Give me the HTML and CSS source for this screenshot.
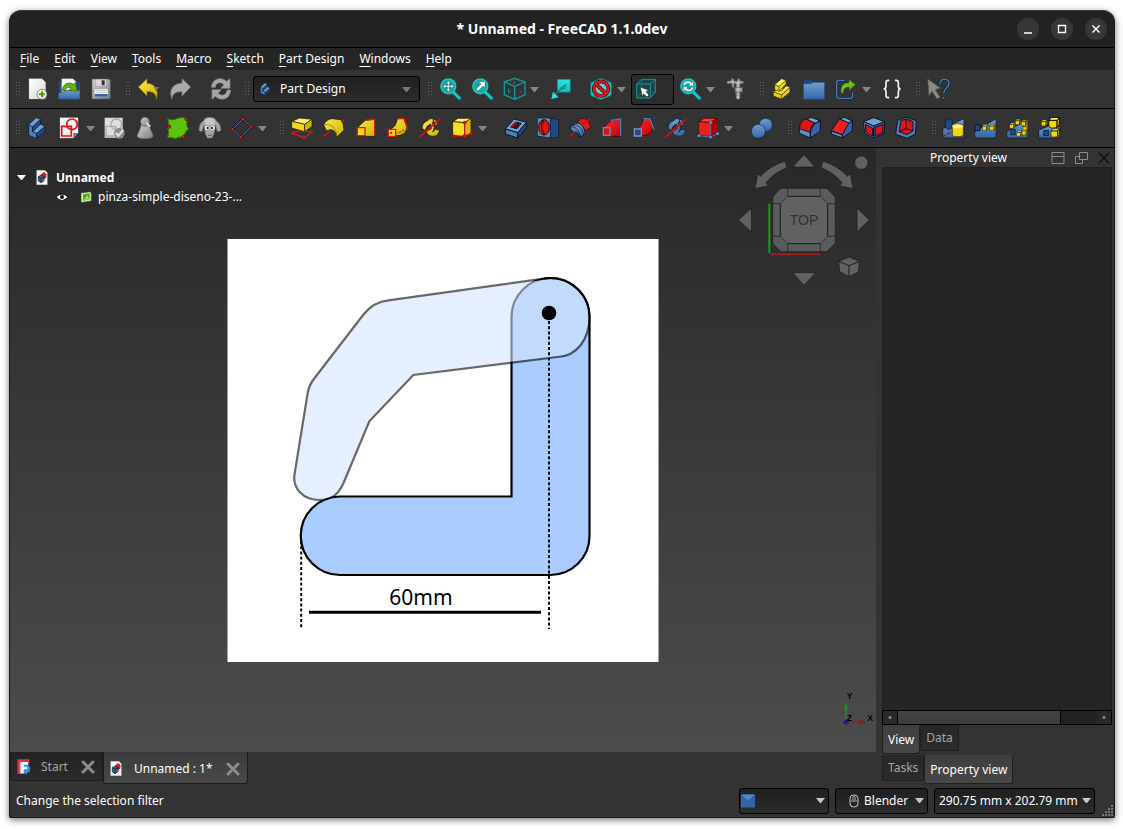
FILE: index.html
```html
<!DOCTYPE html>
<html lang="en">
<head>
<meta charset="utf-8">
<title>* Unnamed - FreeCAD 1.1.0dev</title>
<link rel="stylesheet" href="styles.css">
</head>
<body>
<svg class="defs" aria-hidden="true">
  <defs>
    <linearGradient id="blue" x1="0" y1="0" x2="0" y2="1"><stop offset="0" stop-color="#729fcf"/><stop offset="1" stop-color="#3465a4"/></linearGradient>
    <linearGradient id="yellow" x1="0" y1="0" x2="1" y2="1"><stop offset="0" stop-color="#fce94f"/><stop offset="1" stop-color="#d0b000"/></linearGradient>
    <linearGradient id="red" x1="0" y1="0" x2="1" y2="1"><stop offset="0" stop-color="#ff3030"/><stop offset="1" stop-color="#c00000"/></linearGradient>
    <linearGradient id="grey" x1="0" y1="0" x2="1" y2="1"><stop offset="0" stop-color="#d4d4d4"/><stop offset="1" stop-color="#7c7c7c"/></linearGradient>
    <linearGradient id="paper" x1="0" y1="0" x2="1" y2="1"><stop offset="0" stop-color="#ffffff"/><stop offset="1" stop-color="#d8dad4"/></linearGradient>
    <linearGradient id="green" x1="0" y1="0" x2="1" y2="1"><stop offset="0" stop-color="#8ae234"/><stop offset="1" stop-color="#4e9a06"/></linearGradient>
    <linearGradient id="teal" x1="0" y1="0" x2="0" y2="1"><stop offset="0" stop-color="#2de6e6"/><stop offset="1" stop-color="#0fb8bb"/></linearGradient>
    <symbol id="body" viewBox="0 0 72 72"><g stroke="#0b1521" stroke-width="2" stroke-linejoin="round"><path d="M8 26 30 5l14 5-12 13v10l14 4-16 14v15L8 54Z" fill="#729fcf"/><path d="M8 26l12 6v15l12 5v16L8 58Z" fill="#4a7fc0"/><path d="M20 32 44 10v14L30 38l-10 9ZM32 52l25-22v15L32 68Z" fill="#204a87"/><path d="M20 47 43 25l14 6-25 21Z" fill="#729fcf"/></g></symbol>
    <symbol id="document" viewBox="0 0 36 45"><path d="M2 1h25l7 7v36H2Z" fill="#f4f4f4" stroke="#bbb"/><path d="M16 13l9-6 6 6-1 10-8 4Z" fill="#e01b24" stroke="#700"/><path d="M7 20l9-5 8 5v12l-9 6-8-5Z" fill="#3465a4" stroke="#0b1521" stroke-width="2"/><path d="M7 20l8 5 9-5M15 25v12" fill="none" stroke="#0b1521" stroke-width="2"/></symbol>
    <symbol id="close" viewBox="0 0 14 14"><path d="M2 2l10 10M12 2 2 12" stroke="#8b8b8b" stroke-width="3" stroke-linecap="round"/></symbol>
    <symbol id="arrow" viewBox="0 0 9 5"><path d="M0 0h9L5 5H4Z" fill="currentColor"/></symbol>
    <symbol id="cubelet" viewBox="0 0 24 24"><g stroke="#151500" stroke-width="2" stroke-linejoin="round"><path d="M1 7l5-6h17l-5 6Z" fill="#fff36b"/><path d="M1 7h17v15l-12 1-5-4Z" fill="#f3d900"/><path d="M18 7l5-6v14l-5 7Z" fill="#c4a000"/></g></symbol>
  </defs>
</svg>

<main class="window">
  <header class="titlebar">
    <h1 class="title">* Unnamed - FreeCAD 1.1.0dev</h1>
    <div class="window-buttons">
      <button class="window-button" aria-label="Minimize"><svg viewBox="0 0 22 22"><path d="M7 15h8" stroke="#fff" stroke-width="1.5"/></svg></button>
      <button class="window-button" aria-label="Maximize"><svg viewBox="0 0 22 22"><path d="M7.500 7.500h7v7h-7Z" fill="none" stroke="#fff" stroke-width="1.300"/></svg></button>
      <button class="window-button" aria-label="Close"><svg viewBox="0 0 22 22"><path d="M7.500 7.500l7 7M14.500 7.500l-7 7" stroke="#fff" stroke-width="1.500"/></svg></button>
    </div>
  </header>

  <nav class="menubar">
    <button class="menu"><u>F</u>ile</button>
    <button class="menu"><u>E</u>dit</button>
    <button class="menu"><u>V</u>iew</button>
    <button class="menu"><u>T</u>ools</button>
    <button class="menu"><u>M</u>acro</button>
    <button class="menu"><u>S</u>ketch</button>
    <button class="menu"><u>P</u>art Design</button>
    <button class="menu"><u>W</u>indows</button>
    <button class="menu"><u>H</u>elp</button>
  </nav>

  <div class="toolbar">
    <div class="group">
      <i class="handle"></i>
      <button class="tool" aria-label="New"><svg viewBox="0 0 72 72"><path d="M9 5h38l12 12v49H9Z" fill="url(#paper)" stroke="#aaa"/><path d="M47 5v12h12Z" fill="#fff" stroke="#bbb"/><circle cx="48" cy="52" r="15" fill="#f4f4f4" stroke="#555" stroke-width="2"/><path d="M48 43v18M39 52h18" stroke="#4e9a06" stroke-width="6"/></svg></button>
      <button class="tool" aria-label="Open"><svg viewBox="0 0 72 72"><path d="M2 12h10v30H2Z" fill="#204a87"/><path d="M11 5h34l9 9v40H11Z" fill="#f5f5f5" stroke="#999"/><path d="M54 14h12v28H54Z" fill="#204a87"/><path d="M2 46h16l5-6h43v27H2Z" fill="url(#blue)" stroke="#204a87" stroke-width="2"/><path d="M13 42c1-22 19-29 33-20l6-5 6 26-25-3 7-7c-9-6-18-1-19 9Z" fill="#5fb40d" stroke="#2c5a04" stroke-width="2"/></svg></button>
      <button class="tool" aria-label="Save"><svg viewBox="0 0 72 72"><path d="M6 6h51l4 5v55H6Z" fill="url(#grey)" stroke="#555" stroke-width="2"/><path d="M17 7h32v21H17Z" fill="#d9d9d9" stroke="#888"/><path d="M35 10h9v15h-9Z" fill="#333"/><path d="M13 35h41v25H13Z" fill="#f6f6f6" stroke="#777"/><path d="M17 40h33M17 46h33" stroke="#aaa" stroke-width="2"/><path d="M14 51h39v8H14Z" fill="#3465a4"/></svg></button>
    </div>
    <div class="group">
      <i class="handle"></i>
      <button class="tool" aria-label="Undo"><svg viewBox="0 0 72 72"><path d="M7 30 33 5v14c22 0 37 19 29 48-2-16-11-24-29-23v13Z" fill="url(#yellow)" stroke="#7a6500" stroke-width="2" stroke-linejoin="round"/><path d="M52 30h18L60 41Z" fill="#777"/></svg></button>
      <button class="tool" aria-label="Redo"><svg viewBox="0 0 72 72"><path d="M68 30 42 5v14C18 19 0 37 12 67c0-15 10-24 30-23v13Z" fill="#aaa" stroke="#777" stroke-width="2" stroke-linejoin="round"/></svg></button>
      <button class="tool spaced" aria-label="Refresh"><svg viewBox="0 0 72 72"><g fill="#a6a6a6" stroke="#858585" stroke-width="2"><path d="M7 31C9 4 36-2 53 13l10-8v29H35l10-11C33 13 20 17 19 31Z"/><path d="M65 39C63 68 36 74 19 58L9 67V38h28L27 49c12 10 25 6 27-10Z"/></g></svg></button>
    </div>
    <div class="group">
      <i class="handle"></i>
      <div class="combo workbench">
        <svg class="combo-icon"><use href="#body"/></svg>
        <select aria-label="Workbench"><option>Part Design</option></select>
        <svg class="combo-arrow"><use href="#arrow"/></svg>
      </div>
    </div>
    <div class="group">
      <i class="handle"></i>
      <button class="tool" aria-label="Fit all"><svg viewBox="0 0 72 72"><path d="M44 44 65 64" stroke="#0a7f82" stroke-width="11" stroke-linecap="round"/><path d="M44 44 64 63" stroke="#1ccdd0" stroke-width="7" stroke-linecap="round"/><circle cx="31" cy="28" r="22" fill="#16a4a6" stroke="#1fc4c7" stroke-width="5"/><path d="M31 12l6 7h-4v7h7v-4l7 6-7 6v-4h-7v7h4l-6 7-6-7h4v-7h-7v4l-7-6 7-6v4h7v-7h-4Z" fill="#fff" stroke="#055" stroke-width="1"/></svg></button>
      <button class="tool" aria-label="Fit selection"><svg viewBox="0 0 72 72"><path d="M44 44 65 64" stroke="#0a7f82" stroke-width="11" stroke-linecap="round"/><path d="M44 44 64 63" stroke="#1ccdd0" stroke-width="7" stroke-linecap="round"/><circle cx="31" cy="28" r="22" fill="#16a4a6" stroke="#1fc4c7" stroke-width="5"/><path d="M26 14h19v19l-6-6-15 15-6-6 15-15Z" fill="#fff" stroke="#055" stroke-width="1"/></svg></button>
      <button class="tool" aria-label="Isometric"><svg viewBox="0 0 72 72"><path d="M38 4 69 15v38L38 67 7 53V15ZM7 15l31 13 31-13M38 28v39" fill="none" stroke="#12999b" stroke-width="4" stroke-linejoin="round"/><path d="M20 45v-9M18 49l7-5M37 13v8M58 45l-6-5" stroke="#12999b" stroke-width="3"/></svg></button>
      <button class="drop" aria-label="Standard views"><svg><use href="#arrow"/></svg></button>
      <button class="tool" aria-label="Align to selection"><svg viewBox="0 0 72 72"><path d="M28 7h39v39H28Z" fill="url(#teal)" stroke="#08797b" stroke-width="2"/><path d="M50 26 20 53" stroke="#087d80" stroke-width="4"/><path d="M10 66l5-22 17 17Z" fill="#27dfe2"/><path d="M40 33l14-11-4 13Z" fill="none" stroke="#066" stroke-width="2"/></svg></button>
      <button class="tool spaced" aria-label="Draw style"><svg viewBox="0 0 72 72"><path d="M36 4 67 17v38L36 68 5 55V17Z" fill="#17c9cc" stroke="#087577" stroke-width="3"/><circle cx="36" cy="35" r="22" fill="#c7c7c7" fill-opacity=".45" stroke="#400" stroke-width="11"/><path d="M21 21l30 29" stroke="#400" stroke-width="11"/><circle cx="36" cy="35" r="22" fill="none" stroke="#d81b1b" stroke-width="7"/><path d="M21 21l30 29" stroke="#d81b1b" stroke-width="7"/></svg></button>
      <button class="drop" aria-label="Draw styles"><svg><use href="#arrow"/></svg></button>
      <button class="tool pressed" aria-label="Box element selection"><svg viewBox="0 0 72 72"><path d="M8 21 23 7h41v39L49 63H8ZM8 21h41v42M49 21 64 7" fill="#0a6465" fill-opacity=".45" stroke="#14999b" stroke-width="3"/><path d="M23 8v38H64M23 46 9 62" stroke="#14888a" stroke-width="2" fill="none"/><path d="M19 31l25 8-8 5 9 10-6 6-10-9-4 8Z" fill="#fff" stroke="#333" stroke-width="2"/></svg></button>
      <button class="tool" aria-label="Zoom"><svg viewBox="0 0 72 72"><path d="M44 44 65 64" stroke="#0a7f82" stroke-width="11" stroke-linecap="round"/><path d="M44 44 64 63" stroke="#1ccdd0" stroke-width="7" stroke-linecap="round"/><circle cx="31" cy="28" r="22" fill="#16a4a6" stroke="#1fc4c7" stroke-width="5"/><path d="M15 25c2-14 19-16 26-8l5-4v14H32l4-5c-7-6-13-3-15 4ZM47 31c-2 14-18 16-26 8l-5 4V29h14l-4 5c7 6 13 3 15-4Z" fill="#eee" stroke="#266" stroke-width="1"/></svg></button>
      <button class="drop" aria-label="Zoom options"><svg><use href="#arrow"/></svg></button>
      <button class="tool" aria-label="Measure"><svg viewBox="0 0 72 72"><path d="M9 12h11l4-8 6 3v5h10l2-8 6 3v5h10v8H48v43l-6 6-6-6V20h-6v14l-6-4V20H9Z" fill="#b4b5b2" stroke="#555753" stroke-width="3"/><path d="M33 31h22v14H33Z" fill="#a9aaa7" stroke="#555" stroke-width="3"/><path d="M42 16v46" stroke="#eee" stroke-width="2"/><path d="M38 24h5M38 50h5M38 56h5" stroke="#555" stroke-width="2"/></svg></button>
    </div>
    <div class="group">
      <i class="handle"></i>
      <button class="tool" aria-label="Create part"><svg viewBox="0 0 72 72"><g stroke="#3c3500" stroke-width="2" stroke-linejoin="round"><path d="M10 44l14-8 36-6v15L35 66 10 57Z" fill="#edd400"/><path d="M10 44l25 9v13M35 53l25-22" fill="none"/><path d="M10 44l12-6 13 5 13-17 12 5-25 22Z" fill="#fce94f"/><path d="M14 23 35 5l13 5v12L27 43l-13-5Z" fill="#f2d91b"/><path d="M14 23l13 5v15" fill="none"/><path d="M14 23 35 5l13 5-21 18Z" fill="#fff06a"/></g></svg></button>
      <button class="tool" aria-label="Create group"><svg viewBox="0 0 72 72"><path d="M4 7h23l5 6h30v12H4Z" fill="#204a87" stroke="#122a4e" stroke-width="2"/><path d="M4 20h22l7-4h35v51H4Z" fill="url(#blue)" stroke="#204a87" stroke-width="2"/></svg></button>
      <button class="tool" aria-label="Make link"><svg viewBox="0 0 72 72"><path d="M31 10H14q-6 0-6 7v40q0 7 7 7h34q7 0 7-7V47" fill="none" stroke="#10213a" stroke-width="7"/><path d="M31 10H14q-6 0-6 7v40q0 7 7 7h34q7 0 7-7V47" fill="none" stroke="#4b80c0" stroke-width="4"/><path d="M22 50c-5-22 6-33 23-33V7l20 16-20 18V31c-11 0-18 5-16 17Z" fill="url(#green)" stroke="#234b03" stroke-width="2"/></svg></button>
      <button class="drop" aria-label="Link actions"><svg><use href="#arrow"/></svg></button>
      <button class="tool" aria-label="Expression"><svg viewBox="0 0 72 72"><path d="M28 10h-4q-6 0-6 7v11q0 8-7 8 7 0 7 8v11q0 7 6 7h4M45 10h4q6 0 6 7v11q0 8 7 8-7 0-7 8v11q0 7-6 7h-4" fill="none" stroke="#f2f2f2" stroke-width="5"/></svg></button>
    </div>
    <div class="group">
      <i class="handle"></i>
      <button class="tool" aria-label="What's this?"><svg viewBox="0 0 72 72"><path d="M42 22C40 3 68 1 69 19c0 14-16 14-16 30" fill="none" stroke="#10213a" stroke-width="8"/><path d="M42 22C40 3 68 1 69 19c0 14-16 14-16 30" fill="none" stroke="#4b80c0" stroke-width="4"/><circle cx="53" cy="63" r="4" fill="#4b80c0" stroke="#10213a" stroke-width="2"/><path d="M5 6l38 27-15 5 14 22-9 6-15-23-9 13Z" fill="#898b87" stroke="#51534f" stroke-width="2"/></svg></button>
    </div>
  </div>

  <div class="toolbar design">
    <div class="group">
      <i class="handle"></i>
      <button class="tool" aria-label="New body"><svg><use href="#body"/></svg></button>
      <button class="tool" aria-label="New sketch"><svg viewBox="0 0 72 72"><path d="M6 5h54v46L46 66H6Z" fill="#f6f6f6" stroke="#ccc"/><path d="M46 66V51h14Z" fill="#777"/><circle cx="42" cy="25" r="16" fill="none" stroke="#e81010" stroke-width="5"/><path d="M11 31h29v29H11Z" fill="none" stroke="#e81010" stroke-width="5"/></svg></button>
      <button class="drop" aria-label="Sketch options"><svg><use href="#arrow"/></svg></button>
      <button class="tool" aria-label="Validate sketch"><svg viewBox="0 0 72 72"><path d="M8 5h54v60H8Z" fill="#dedede"/><circle cx="43" cy="25" r="16" fill="none" stroke="#aaa" stroke-width="4"/><path d="M12 31h29v29H12Z" fill="none" stroke="#aaa" stroke-width="4"/><circle cx="52" cy="52" r="16" fill="#8b8b8b"/><path d="M41 50l8 9 15-18" fill="none" stroke="#ddd" stroke-width="7"/></svg></button>
      <button class="tool" aria-label="Check geometry"><svg viewBox="0 0 72 72"><path d="M23 27 9 60q2 8 24 8t25-8L44 27Z" fill="url(#grey)" stroke="#666" stroke-width="2"/><ellipse cx="33" cy="30" rx="14" ry="4" fill="#a7a7a7"/><circle cx="33" cy="17" r="13" fill="url(#grey)" stroke="#666" stroke-width="2"/><path d="M37 20l12 12" stroke="#ddd" stroke-width="6"/></svg></button>
      <button class="tool" aria-label="Shape binder"><svg viewBox="0 0 72 72"><path d="M5 8q16 8 30-1 14-5 31 0-9 21 2 32-14 9-13 25-19-4-26 4-12-5-24-3 6-17-1-31Q11 23 5 8Z" fill="#5dc20b" stroke="#377706" stroke-width="3"/><g fill="#e41b1b" stroke="#300" stroke-width="2"><circle cx="62" cy="9" r="5"/><circle cx="9" cy="32" r="5"/><circle cx="53" cy="63" r="5"/></g></svg></button>
      <button class="tool" aria-label="Clone"><svg viewBox="0 0 72 72"><path d="M17 14q2-10 18-10 17 0 19 10 14 6 15 30l-11 3-6-19-4 26-6 12H28l-6-12-4-26-6 19-9-3q0-24 14-30Z" fill="#a6a6a6" stroke="#686868" stroke-width="2"/><path d="M19 14q16-17 32 0l-3 12H22Z" fill="#c4c4c4"/><ellipse cx="27" cy="36" rx="7" ry="6" fill="#e7e7e7"/><ellipse cx="44" cy="36" rx="7" ry="6" fill="#e7e7e7"/><circle cx="29" cy="36" r="3"/><circle cx="42" cy="36" r="3"/><path d="M29 56q7 6 13 0" fill="none" stroke="#555" stroke-width="3"/></svg></button>
      <button class="tool" aria-label="Datum plane"><svg viewBox="0 0 72 72"><path d="M39 9 63 32 32 63 8 40Z" fill="none" stroke="#10213a" stroke-width="7"/><path d="M39 9 63 32 32 63 8 40Z" fill="none" stroke="#4b80c0" stroke-width="3"/><g fill="#ef2020" stroke="#500" stroke-width="2"><circle cx="39" cy="9" r="5"/><circle cx="63" cy="32" r="5"/><circle cx="32" cy="63" r="5"/><circle cx="8" cy="40" r="5"/></g></svg></button>
      <button class="drop" aria-label="Datum options"><svg><use href="#arrow"/></svg></button>
    </div>
    <div class="group">
      <i class="handle"></i>
      <button class="tool" aria-label="Pad"><svg viewBox="0 0 72 72"><path d="M5 52 28 44l38 4-23 17Z" fill="none" stroke="#e01717" stroke-width="4"/><g stroke="#171300" stroke-width="2" stroke-linejoin="round"><path d="M5 16 29 6l37 4-22 15Z" fill="#fff36b"/><path d="M5 16l39 9v22L5 36Z" fill="#f0d81c"/><path d="M44 25 66 10v21L44 47Z" fill="#d3b900"/></g></svg></button>
      <button class="tool" aria-label="Revolution"><svg viewBox="0 0 72 72"><path d="M48 25 68 10" stroke="#d01010" stroke-width="5"/><path d="M5 26Q14 9 30 8l26 3q10 12 10 31L45 63Q42 44 27 41l-14 3Z" fill="url(#yellow)" stroke="#171300" stroke-width="2"/><path d="M5 26q36-6 40 37" fill="none" stroke="#806c00" stroke-width="2"/><path d="M4 62l19-15" stroke="#d01010" stroke-width="5"/></svg></button>
      <button class="tool" aria-label="Loft"><svg viewBox="0 0 72 72"><path d="M10 35 34 13l29-3v51H33Z" fill="url(#yellow)" stroke="#171300" stroke-width="2"/><path d="M32 13 62 9v51" fill="none" stroke="#e01717" stroke-width="4"/><path d="M10 35h23v24H10Z" fill="#f1d81b" stroke="#e01717" stroke-width="4"/></svg></button>
      <button class="tool" aria-label="Sweep"><svg viewBox="0 0 72 72"><path d="M10 41Q32 32 34 8l22-1q18 44-15 51L25 59Z" fill="url(#yellow)" stroke="#171300" stroke-width="2"/><path d="M34 8h20l12 34" fill="none" stroke="#e01717" stroke-width="4"/><path d="M34 50q13-1 21-10" fill="none" stroke="#c87700" stroke-width="5"/><path d="M7 40h22v21H7Z" fill="#f1d81b" stroke="#e01717" stroke-width="4"/><path d="M9 53 18 45v8Z" fill="#d01010"/><circle cx="67" cy="6" r="4" fill="#900"/></svg></button>
      <button class="tool" aria-label="Helix"><svg viewBox="0 0 72 72"><path d="M47 11q-10-8-18 3-16 5-17 23l10 7q2-15 16-20l2 14-16 9 8 11q27 11 33-16l-12-2-9 8q10-17-1-25ZM46 9l14 8-5 14" fill="url(#yellow)" stroke="#171300" stroke-width="2"/><path d="M4 64 67 8" stroke="#d01010" stroke-width="5"/></svg></button>
      <button class="tool" aria-label="Additive primitive"><svg viewBox="0 0 72 72"><g stroke="#171300" stroke-width="2"><path d="M8 17 24 7h39L44 20Z" fill="#fff36b"/><path d="M8 17l36 3v42L8 58Z" fill="#f4de29"/><path d="M44 20 63 7v44L44 62Z" fill="#d2b800"/></g><path d="M44 20v36M9 61l35-1 22-8" fill="none" stroke="#d01010" stroke-width="3"/><g fill="#e01010" stroke="#500"><circle cx="44" cy="20" r="5"/><circle cx="9" cy="60" r="5"/><circle cx="44" cy="61" r="6"/><circle cx="65" cy="52" r="5"/></g></svg></button>
      <button class="drop" aria-label="Additive primitives"><svg><use href="#arrow"/></svg></button>
      <button class="tool apart" aria-label="Pocket"><svg viewBox="0 0 72 72"><g stroke="#0b1521" stroke-width="3" stroke-linejoin="round"><path d="M4 39 30 9l38 10-27 31Z" fill="#729fcf"/><path d="M4 39l37 11v16L4 54Z" fill="#4b80c0"/><path d="M41 50 68 19v16L41 66Z" fill="#204a87"/><path d="M20 33 35 18l17 4-14 16Z" fill="#d90b0b"/><path d="M28 34l15-14-1 14-6 4Z" fill="#6e0000"/></g></svg></button>
      <button class="tool" aria-label="Hole"><svg viewBox="0 0 72 72"><path d="M43 7l25 3v55l-25 1Z" fill="#204a87" stroke="#0b1521" stroke-width="2"/><path d="M4 6h39v60L4 60Z" fill="#5d8dc5" stroke="#0b1521" stroke-width="2"/><ellipse cx="24" cy="34" rx="16" ry="23" fill="#dc1717" stroke="#300" stroke-width="3"/><path d="M23 13q-14 21 3 42" fill="none" stroke="#750000" stroke-width="5"/></svg></button>
      <button class="tool" aria-label="Groove"><svg viewBox="0 0 72 72"><path d="M26 19 41 7q23 0 27 27L53 45Z" fill="#dd1919" stroke="#300" stroke-width="2"/><path d="M41 23 67 10" stroke="#d01010" stroke-width="5"/><path d="M4 34 22 22q21-7 30 28l-12 13-7-4q-5-15-16-9Z" fill="url(#blue)" stroke="#0b1521" stroke-width="3"/><path d="M4 34q24-7 34 26M14 28q24-7 33 27" fill="none" stroke="#0b1521" stroke-width="2"/><path d="M5 62l15-12" stroke="#d01010" stroke-width="5"/></svg></button>
      <button class="tool" aria-label="Subtractive loft"><svg viewBox="0 0 72 72"><path d="M10 35 34 13l29-3v51H33Z" fill="url(#red)" stroke="#200" stroke-width="2"/><path d="M32 13 62 9v51" fill="none" stroke="#4b80c0" stroke-width="4"/><path d="M10 35h20v23H10Z" fill="#d81515" stroke="#5d8dc5" stroke-width="4"/></svg></button>
      <button class="tool" aria-label="Subtractive sweep"><svg viewBox="0 0 72 72"><path d="M10 41Q32 32 34 8l22-1q18 44-15 51L25 59Z" fill="url(#red)" stroke="#200" stroke-width="2"/><path d="M34 8h20l12 34" fill="none" stroke="#4b80c0" stroke-width="4"/><path d="M7 39h21v21H7Z" fill="#204a87" stroke="#6b9ad0" stroke-width="4"/><path d="M9 53 18 45v8Z" fill="#d01010"/><circle cx="67" cy="6" r="4" fill="#204a87"/></svg></button>
      <button class="tool" aria-label="Subtractive helix"><svg viewBox="0 0 72 72"><path d="M47 11q-10-8-18 3-16 5-17 23l10 7q2-15 16-20l2 14-16 9 8 11q27 11 33-16l-12-2-9 8q10-17-1-25ZM46 9l14 8-5 14" fill="url(#blue)" stroke="#0b1521" stroke-width="2"/><path d="M4 64 67 8" stroke="#d01010" stroke-width="5"/></svg></button>
      <button class="tool" aria-label="Subtractive primitive"><svg viewBox="0 0 72 72"><g stroke="#300" stroke-width="2"><path d="M8 17 24 7h39L44 20Z" fill="#ff3939"/><path d="M8 17l36 3v42L8 57Z" fill="#ed2020"/><path d="M44 20 63 7v44L44 62Z" fill="#b60000"/></g><path d="M44 20v36M9 59l35 4 20-10" fill="none" stroke="#4b80c0" stroke-width="3"/><g fill="#6b9ad0" stroke="#0b1521"><circle cx="44" cy="20" r="5"/><circle cx="9" cy="59" r="5"/><circle cx="44" cy="63" r="5"/><circle cx="65" cy="53" r="5"/></g></svg></button>
      <button class="drop" aria-label="Subtractive primitives"><svg><use href="#arrow"/></svg></button>
      <button class="tool apart" aria-label="Boolean"><svg viewBox="0 0 72 72"><circle cx="47" cy="27" r="20" fill="url(#blue)" stroke="#0b2545" stroke-width="2"/><circle cx="25" cy="46" r="21" fill="url(#blue)" stroke="#0b2545" stroke-width="2"/></svg></button>
    </div>
    <div class="group">
      <i class="handle"></i>
      <button class="tool" aria-label="Fillet"><svg viewBox="0 0 72 72"><g stroke="#0b1521" stroke-width="3" stroke-linejoin="round"><path d="M4 34v18l33 14V45Z" fill="#5d8dc5"/><path d="M37 45 50 22l17-7v31L37 66Z" fill="#3465a4"/><path d="M25 9 40 4l27 11-17 7Z" fill="#729fcf"/><path d="M4 38Q6 12 25 9l27 13q-15 4-15 27Z" fill="#e01717"/></g></svg></button>
      <button class="tool" aria-label="Chamfer"><svg viewBox="0 0 72 72"><g stroke="#0b1521" stroke-width="3" stroke-linejoin="round"><path d="M4 45v9l33 12V56Z" fill="#5d8dc5"/><path d="M37 56 56 21l11-6v30L37 66Z" fill="#3465a4"/><path d="M28 9l15-5 24 11-11 6Z" fill="#729fcf"/><path d="M4 44 28 9l28 12-19 35Z" fill="#ee2020"/></g></svg></button>
      <button class="tool" aria-label="Draft"><svg viewBox="0 0 72 72"><g stroke="#0b1521" stroke-width="3" stroke-linejoin="round"><path d="M4 17 35 5l33 12-33 13Z" fill="#729fcf"/><path d="M4 17l31 13v36L8 53Z" fill="#5d8dc5"/><path d="M35 30 68 17l-2 36-31 13Z" fill="#3465a4"/><path d="M10 25l22 12v23L12 50ZM39 35l24-10-1 25-23 10Z" fill="#de1515"/></g></svg></button>
      <button class="tool" aria-label="Thickness"><svg viewBox="0 0 72 72"><g stroke="#0b1521" stroke-width="3" stroke-linejoin="round"><path d="M11 13 36 4l31 10-3 40-25 13L5 55Z" fill="#4b80c0"/><path d="M20 14l16-5 21 8v28l-18 11-23-9Z" fill="#df1414"/><path d="M36 9v29l-20 9M36 38l21 7" fill="none"/></g></svg></button>
    </div>
    <div class="group">
      <i class="handle"></i>
      <button class="tool" aria-label="Mirrored"><svg viewBox="0 0 72 72"><path d="M2 66V38L66 8v58Z" fill="url(#blue)" stroke="#0b1521" stroke-width="2"/><path d="M10 7l9 6 11-6v29l-11 5-9-7Z" fill="#204a87" stroke="#0b1521" stroke-width="2"/><path d="M3 62 67 23" stroke="#c01010" stroke-width="5" stroke-dasharray="10 5"/><path d="M31 31q0-7 16-7t17 7v24q-1 7-17 7t-16-7Z" fill="#f0d71a" stroke="#302900" stroke-width="2"/><ellipse cx="47" cy="31" rx="16" ry="6" fill="#fff17a"/></svg></button>
      <button class="tool" aria-label="Linear pattern"><svg viewBox="0 0 72 72"><path d="M2 66V47L66 8v58Z" fill="url(#blue)" stroke="#0b1521" stroke-width="2"/><path d="M3 27h15v17H3Z" fill="#204a87" stroke="#0b1521" stroke-width="3"/><use href="#cubelet" x="24" y="25" width="19" height="19"/><use href="#cubelet" x="46" y="25" width="19" height="19"/></svg></button>
      <button class="tool" aria-label="Polar pattern"><svg viewBox="0 0 72 72"><path d="M2 66V48L66 8v58Z" fill="url(#blue)" stroke="#0b1521" stroke-width="2"/><path d="M14 40h14v16H14Z" fill="#204a87" stroke="#0b1521" stroke-width="2"/><use href="#cubelet" x="10" y="20" width="18" height="18"/><use href="#cubelet" x="27" y="9" width="18" height="18"/><use href="#cubelet" x="45" y="12" width="18" height="18"/><use href="#cubelet" x="50" y="27" width="18" height="18"/><use href="#cubelet" x="31" y="44" width="18" height="18"/><use href="#cubelet" x="47" y="40" width="18" height="18"/></svg></button>
      <button class="tool" aria-label="Multi transform"><svg viewBox="0 0 72 72"><path d="M2 66V43l30-13 34 3v33Z" fill="url(#blue)" stroke="#0b1521" stroke-width="2"/><use href="#cubelet" x="9" y="11" width="20" height="20"/><use href="#cubelet" x="30" y="3" width="37" height="35"/><path d="M17 43h15v16H17Z" fill="#204a87" stroke="#0b1521" stroke-width="2"/><use href="#cubelet" x="37" y="37" width="29" height="28"/></svg></button>
    </div>
  </div>

  <div class="workspace">
    <section class="documents">
      <div class="viewport">
        <ul class="tree">
          <li class="tree-row">
            <svg class="expander" viewBox="0 0 9 5"><path d="M0 0h9L5 5H4Z" fill="#fff"/></svg>
            <svg class="doc-icon"><use href="#document"/></svg>
            <strong>Unnamed</strong>
          </li>
          <li class="tree-row child">
            <svg class="eye" viewBox="0 0 12 8"><path d="M0 4q6-6 12 0-6 7-12 0Z" fill="#fff" stroke="#111" stroke-width="1"/><circle cx="6" cy="4" r="2" fill="#111"/></svg>
            <svg class="image-icon" viewBox="0 0 36 36"><path d="M3 6 30 2l4 4v24L8 34H3Z" fill="#d9f2bd" stroke="#315315" stroke-width="2"/><path d="M9 10l20-3v18L9 29Z" fill="#53a61c"/><path d="M11 27l11-15 6 13Z" fill="#9ed964"/></svg>
            <span>pinza-simple-diseno-23-...</span>
          </li>
        </ul>

        <svg class="drawing" viewBox="227 238 432 423" role="img" aria-label="Clamp drawing, 60mm">
          <rect x="227.500" y="238" width="431" height="423" fill="#fff"/>
          <path d="M511.500 495.500V316a39 39 0 0 1 78 0V535a39 39 0 0 1-39 39H340a39 39 0 0 1 0-78.500Z" fill="#aaccff" stroke="#000" stroke-width="2.200"/>
          <g opacity=".59"><path d="M544 277.700 388.500 299.300Q374 300.500 363.500 313.500L315 376.500Q309 384 307.700 392L295 470.500C291 488 304 499 319.500 499 333 499 339 492 343.500 482L369.300 420.300 413.300 374 557.500 356C576 355.500 589.500 339 589.500 316A39 39 0 0 0 544 277.700Z" fill="#d5e5ff" stroke="#000" stroke-width="2.200"/></g>
          <path d="M541 278.200A39 39 0 0 1 589.500 316" fill="none" stroke="#000" stroke-width="1.500"/>
          <circle cx="549" cy="312" r="7.300"/>
          <path d="M549 320V628M301.200 540V628" stroke="#000" stroke-width="2" stroke-dasharray="3 2.200"/>
          <path d="M309 611.300H541" stroke="#000" stroke-width="3"/>
          <text x="421" y="604" text-anchor="middle" class="dimension">60mm</text>
        </svg>

        <svg class="navcube" viewBox="0 9 468 423" role="img" aria-label="Navigation cube">
          <g fill="#606163" stroke="#19191a" stroke-width="2" stroke-linejoin="round">
            <path d="M252 29l33 37h-67ZM218 383h69l-35 38ZM55 225l39-35v70ZM448 225l-37-35v70Z"/>
            <circle cx="424" cy="53" r="20"/>
            <path d="M195 48Q148 64 122 94l-9-8-8 45 41-9-9-8q26-32 64-46Z"/>
            <path d="M309 48q47 16 73 46l9-8 8 45-41-9 9-8q-26-32-64-46Z"/>
            <path d="M182 130H320l26 26V295l-26 25H182l-24-25V156Z" fill="#5a5b5d"/>
            <path d="M203 154h98l22 22v98l-22 22h-98l-22-22v-98Z" fill="#606163"/>
            <path d="M203 130v24h98v-24M346 176h-23v98h23M301 320v-24h-98v24M158 274h23v-98h-23" fill="none"/>
            <path d="M387 336l31 13-3 31-28 15-28-15-3-31Z"/>
            <path d="M356 349l31 13 31-13M387 362v33" fill="none" stroke-width="3"/>
          </g>
          <path d="M148 176V325" stroke="#1f9a1f" stroke-width="6"/>
          <path d="M150 328H302" stroke="#a01d1d" stroke-width="6"/>
          <path d="M145 326h6v6h-6Z" fill="#1515a0"/>
          <text x="252" y="240" text-anchor="middle" class="face">TOP</text>
        </svg>

        <svg class="axes" viewBox="360 24 108 120" role="img" aria-label="Axis cross">
          <path d="M378 124V84" stroke="#3a7a3a" stroke-width="5"/><path d="M378 65l8 21h-16Z" fill="#1d8a1d"/>
          <path d="M380 126h38" stroke="#7a3030" stroke-width="5"/><path d="M440 126l-22 8v-16Z" fill="#8a1d1d"/>
          <path d="M378 116l11 10-11 9-10-9Z" fill="#1d1d8a"/>
          <text x="380" y="58" class="axis">Y</text><text x="380" y="122" class="axis">Z</text><text x="442" y="122" class="axis">X</text>
        </svg>
      </div>
      <div class="doc-tabs">
        <div class="doc-tab">
          <svg class="start-icon" viewBox="0 0 42 48"><path d="M1 1h36v13H23v31H1Z" fill="#e0343f"/><path d="M25 13l5 4 6-1v7l5 4-4 5 3 7-8 1-3 6-7-3-7 3V13Z" fill="#3d8fe0"/><path d="M10 9h23v8H20v6h11v8H20v12H10Z" fill="#fff"/></svg>
          <button class="doc-name">Start</button>
          <button class="close" aria-label="Close Start"><svg><use href="#close"/></svg></button>
        </div>
        <div class="doc-tab active">
          <svg class="doc-icon"><use href="#document"/></svg>
          <button class="doc-name">Unnamed : 1*</button>
          <button class="close" aria-label="Close Unnamed"><svg><use href="#close"/></svg></button>
        </div>
      </div>
    </section>

    <aside class="dock">
      <header class="dock-head">
        <h2 class="dock-title">Property view</h2>
        <div class="dock-buttons">
          <button aria-label="Collapse"><svg viewBox="0 0 14 14"><path d="M1 1.500h12v11H1ZM1 5.500h12" fill="none" stroke="#8c8c8c"/></svg></button>
          <button aria-label="Float"><svg viewBox="0 0 14 14"><path d="M5.500 1.500h8v7h-8ZM5 5.500H1.500v7h7V9" fill="none" stroke="#8c8c8c"/></svg></button>
          <button aria-label="Close panel"><svg viewBox="0 0 14 14"><path d="M2 2l10 10M12 2 2 12" stroke="#111" stroke-width="1.500"/></svg></button>
        </div>
      </header>
      <div class="properties"></div>
      <div class="scrollbar"><i class="scroll-end"></i><i class="scroll-thumb"></i><i class="scroll-space"></i><i class="scroll-end"></i></div>
      <div class="tabs"><button class="tab active">View</button><button class="tab">Data</button></div>
      <div class="tabs"><button class="tab">Tasks</button><button class="tab active">Property view</button></div>
    </aside>
  </div>

  <footer class="statusbar">
    <p class="message">Change the selection filter</p>
    <div class="combo filter">
      <svg class="combo-icon" viewBox="0 0 14 13"><path d="M0 0h14v13H0Z" fill="#3465a4"/><path d="M0 0l7 6 7-6Z" fill="#5588c6"/></svg>
      <select aria-label="Notifications"><option></option></select>
      <svg class="combo-arrow"><use href="#arrow"/></svg>
    </div>
    <div class="combo navigation">
      <svg class="combo-icon" viewBox="0 0 30 42"><rect x="3" y="3" width="24" height="36" rx="11" fill="none" stroke="#ccc" stroke-width="3"/><path d="M15 3v8M5 20q10 4 20 0" stroke="#ccc" stroke-width="2" fill="none"/><rect x="11" y="8" width="8" height="11" rx="4" fill="#333" stroke="#ccc" stroke-width="2"/></svg>
      <select aria-label="Navigation style"><option>Blender</option></select>
      <svg class="combo-arrow"><use href="#arrow"/></svg>
    </div>
    <div class="combo size">
      <select aria-label="View size"><option>290.75 mm x 202.79 mm</option></select>
      <svg class="combo-arrow"><use href="#arrow"/></svg>
    </div>
    <svg class="grip" viewBox="0 0 12 12"><path d="M10 0h2v2h-2ZM7 3h2v2H7Zm3 0h2v2h-2ZM4 6h2v2H4Zm3 0h2v2H7Zm3 0h2v2h-2ZM1 9h2v2H1Zm3 0h2v2H4Zm3 0h2v2H7Zm3 0h2v2h-2Z" fill="#777"/></svg>
  </footer>
</main>
</body>
</html>
```
FILE: styles.css
```css
* { box-sizing: border-box; }
html { height: 100%; background: #fff; }
body {
  height: 100%;
  margin: 0;
  padding: 10px 8px 11px 9px;
  font: 12px/18px "Noto Sans", sans-serif;
  color: #fff;
}
button, select {
  margin: 0;
  padding: 0;
  border: 0;
  background: none;
  color: inherit;
  font: inherit;
}
h1, h2, p, ul { margin: 0; padding: 0; }
svg { display: block; flex: none; }
.defs { position: absolute; width: 0; height: 0; }

.window {
  display: flex;
  flex-direction: column;
  height: 100%;
  overflow: hidden;
  border: 1px solid #1b1b1b;
  border-top-color: #3a3a3a;
  border-radius: 12px 12px 2px 2px;
  background: #333;
  box-shadow: 0 2px 7px rgba(0, 0, 0, .55);
}

.titlebar {
  display: grid;
  grid-template-columns: 1fr auto 1fr;
  align-items: center;
  height: 37px;
  border-bottom: 1px solid #000;
  background: #222;
}
.title { grid-column: 2; font-size: 14px; font-weight: 700; }
.window-buttons { display: flex; justify-content: flex-end; gap: 12px; padding-right: 7px; }
.window-button { width: 22px; height: 22px; border-radius: 50%; background: #373737; }

.menubar { display: flex; height: 22px; padding: 0 2px; background: #252525; }
.menu { padding: 0 7px 0 8px; line-height: 22px; }
.menu u { text-underline-offset: 3px; text-decoration-thickness: 1px; }

.toolbar {
  display: flex;
  gap: 2px;
  height: 39px;
  border-bottom: 1px solid #000;
  background: #333;
}
.group { display: flex; align-items: center; }
.handle {
  width: 6px;
  height: 16px;
  margin: 0 1px 0 5px;
  background: radial-gradient(circle, #626262 1px, transparent 1px) 0 0 / 3px 3px;
}
.tool { display: grid; place-items: center; width: 32px; height: 32px; }
.tool svg { width: 24px; height: 24px; }
.tool.spaced { margin-left: 9px; }
.tool.apart { margin-left: 10px; }
.tool.pressed {
  justify-content: start;
  width: 43px;
  height: 31px;
  padding-left: 2px;
  border: 1px solid #000;
  border-radius: 3px;
  background: #2c2c2c;
}
.drop { width: 14px; height: 32px; color: #858585; }
.drop svg { width: 9px; height: 5px; }
.design { gap: 4px; }
.design .drop { width: 12px; }

.combo {
  position: relative;
  display: grid;
  align-items: center;
  height: 26px;
  border: 1px solid #000;
  border-radius: 3px;
  background: linear-gradient(#1f1f1f, #2c2c2c);
}
.combo > * { grid-area: 1 / 1; }
.combo select { width: 100%; height: 100%; padding-left: 4px; appearance: none; }
.combo option { color: #fff; background: #252525; }
.combo-arrow { justify-self: end; width: 9px; height: 5px; margin-right: 3px; color: #c8c8c8; pointer-events: none; }
.combo-icon { width: 14px; height: 14px; pointer-events: none; }
.workbench { width: 167px; margin-left: 2px; }
.workbench select { padding-left: 26px; }
.workbench .combo-icon { margin-left: 5px; }
.workbench .combo-arrow { margin-right: 8px; color: #777; }

.workspace { display: grid; grid-template-columns: 1fr 238px; flex: 1; min-height: 0; }
.documents { display: flex; flex-direction: column; min-width: 0; }
.viewport {
  position: relative;
  display: grid;
  place-items: center;
  flex: 1;
  background: linear-gradient(#282828, #4c4c4c);
}
.drawing { width: 432px; height: 423px; }
.dimension { font: 21px "Noto Sans", sans-serif; fill: #000; }
.navcube { position: absolute; top: 0; right: 0; width: 156px; height: 141px; }
.face { font: 42px "Liberation Sans", sans-serif; fill: #303133; }
.axes { position: absolute; right: 0; bottom: 24px; width: 36px; height: 40px; }
.axis { font: 700 26px "Liberation Sans", sans-serif; fill: #000; }

.tree { position: absolute; top: 20px; left: 7px; list-style: none; }
.tree-row { display: flex; align-items: center; height: 19px; }
.expander { width: 9px; height: 5px; margin-right: 10px; }
.doc-icon { width: 12px; height: 15px; }
.tree-row strong { margin-left: 8px; }
.tree-row.child { padding-left: 39px; }
.eye { width: 12px; height: 8px; margin-right: 12px; }
.image-icon { width: 12px; height: 12px; margin-right: 6px; }

.doc-tabs { display: flex; align-items: flex-start; height: 32px; }
.doc-tab {
  display: flex;
  align-items: center;
  height: 29px;
  padding: 2px 7px 0 6px;
  border: 1px solid #1c1c1c;
  border-top: 0;
  border-radius: 0 0 3px 3px;
  background: linear-gradient(#232323, #2b2b2b);
  color: #a5a5a5;
}
.doc-tab.active { height: 32px; background: linear-gradient(#3b3b3b, #494949); color: #fff; }
.start-icon { width: 14px; height: 16px; }
.doc-name { margin: 0 13px 0 10px; }
.doc-tab.active .doc-name { margin-left: 12px; }
.close { width: 14px; height: 14px; }
.close svg { width: 14px; height: 14px; }

.dock { display: flex; flex-direction: column; padding-left: 6px; }
.dock-head {
  display: grid;
  grid-template-columns: 1fr auto;
  align-items: center;
  height: 19px;
  padding-right: 3px;
}
.dock-title { padding-left: 4px; font-size: 12px; font-weight: 400; text-align: center; }
.dock-buttons { display: flex; gap: 9px; }
.dock-buttons svg { width: 14px; height: 14px; }
.properties { flex: 1; margin-right: 2px; border: 1px solid #202020; border-bottom: 0; background: #252525; }
.scrollbar { display: flex; height: 15px; margin-right: 2px; border: 1px solid #000; }
.scroll-end {
  width: 14px;
  background: radial-gradient(circle, #888 1px, transparent 2px), #292929;
}
.scroll-thumb { flex: 1; border: solid #000; border-width: 0 1px; background: linear-gradient(#464646, #3c3c3c); }
.scroll-space { flex: 0 0 36px; background: #222; }
.tabs { display: flex; align-items: flex-start; height: 29px; }
.tab {
  height: 26px;
  padding: 1px 5px 0;
  border: 1px solid #202020;
  border-top: 0;
  border-radius: 0 0 3px 3px;
  background: linear-gradient(#272727, #2c2c2c);
  color: #a5a5a5;
}
.tab.active { height: 29px; background: linear-gradient(#3e3e3e, #484848); color: #fff; }
.dock .tabs + .tabs { margin-top: 1px; }

.statusbar { display: flex; align-items: center; gap: 6px; height: 33px; padding: 0 1px 0 6px; }
.message { flex: 1; }
.filter { width: 90px; }
.navigation { width: 93px; }
.size { width: 161px; }
.filter .combo-icon { margin-left: 1px; }
.navigation .combo-icon { width: 10px; margin-left: 13px; }
.navigation select { padding-left: 28px; }
.grip { align-self: flex-end; width: 12px; height: 12px; }
```
